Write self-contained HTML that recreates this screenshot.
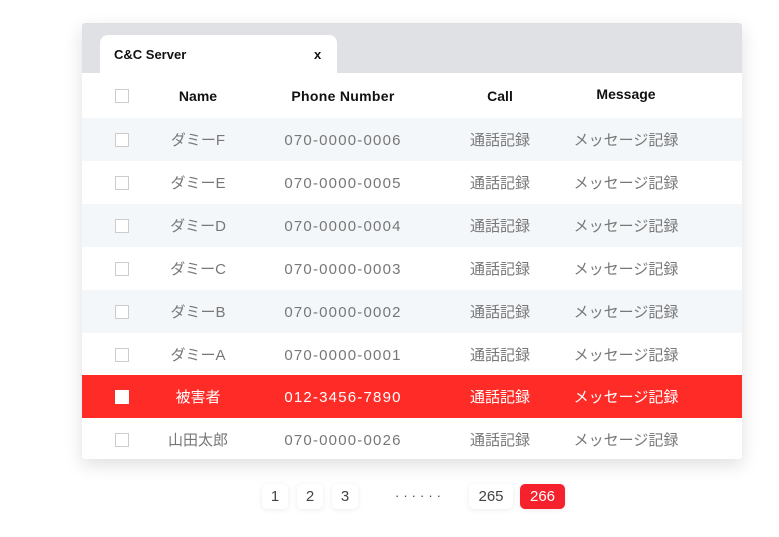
<!DOCTYPE html>
<html><head><meta charset="utf-8"><style>
body{margin:0;width:779px;height:537px;background:#fff;font-family:"Liberation Sans","Noto Sans CJK JP",sans-serif;position:relative;overflow:hidden}
.card{position:absolute;left:82px;top:23px;width:660px;height:436px;background:#fff;box-shadow:0 6px 18px rgba(0,0,0,.13);border-radius:3px;overflow:hidden}
.bar{position:absolute;left:0;top:0;width:660px;height:50px;background:#dfe1e5}
.tab{position:absolute;left:18px;top:12px;width:237px;height:38px;background:#fff;border-radius:8px 8px 0 0}
.tab .t{position:absolute;left:14px;top:12px;font-size:13px;font-weight:bold;color:#111}
.tab .x{position:absolute;left:214px;top:12px;font-size:13px;font-weight:bold;color:#111}
.row{position:absolute;left:0;width:660px;height:43px;font-size:15px;color:#777}
.row span{position:absolute;top:1px;line-height:43px;transform:translateX(-50%);white-space:nowrap}
.row span.p{letter-spacing:1.2px}
.cb{position:absolute;left:33px;top:15px;width:12px;height:12px;border:1px solid #ccc;background:#fff}
.hd{top:50px;height:45px;border-bottom:1px solid #e5e5e5;color:#111;font-weight:bold;font-size:14px}
.hd span{line-height:45px}
.s{background:#f4f7fa}
.red{background:#ff2b26;color:#fff}
.red .cb{border-color:#fff}
.pg{position:absolute;top:484px;height:25px;line-height:25px;text-align:center;font-size:15px;color:#444;background:#fff;border-radius:5px;box-shadow:0 1px 6px rgba(0,0,0,.08)}
</style></head><body>
<div class="card">
<div class="bar"></div>
<div class="tab"><span class="t">C&amp;C Server</span><span class="x">x</span></div>
<div class="row hd"><div class="cb" style="top:16px"></div><span style="left:116px">Name</span><span style="left:261px;letter-spacing:.3px">Phone Number</span><span style="left:418px">Call</span><span style="left:544px;top:-1px">Message</span></div>
<div class="row s" style="top:95px"><div class="cb"></div><span style="left:116px">ダミーF</span><span class="p" style="left:261px">070-0000-0006</span><span style="left:418px">通話記録</span><span style="left:544px">メッセージ記録</span></div>
<div class="row" style="top:138px"><div class="cb"></div><span style="left:116px">ダミーE</span><span class="p" style="left:261px">070-0000-0005</span><span style="left:418px">通話記録</span><span style="left:544px">メッセージ記録</span></div>
<div class="row s" style="top:181px"><div class="cb"></div><span style="left:116px">ダミーD</span><span class="p" style="left:261px">070-0000-0004</span><span style="left:418px">通話記録</span><span style="left:544px">メッセージ記録</span></div>
<div class="row" style="top:224px"><div class="cb"></div><span style="left:116px">ダミーC</span><span class="p" style="left:261px">070-0000-0003</span><span style="left:418px">通話記録</span><span style="left:544px">メッセージ記録</span></div>
<div class="row s" style="top:267px"><div class="cb"></div><span style="left:116px">ダミーB</span><span class="p" style="left:261px">070-0000-0002</span><span style="left:418px">通話記録</span><span style="left:544px">メッセージ記録</span></div>
<div class="row" style="top:310px"><div class="cb"></div><span style="left:116px">ダミーA</span><span class="p" style="left:261px">070-0000-0001</span><span style="left:418px">通話記録</span><span style="left:544px">メッセージ記録</span></div>
<div class="row red" style="top:352px"><div class="cb"></div><span style="left:116px">被害者</span><span class="p" style="left:261px">012-3456-7890</span><span style="left:418px">通話記録</span><span style="left:544px">メッセージ記録</span></div>
<div class="row" style="top:395px"><div class="cb"></div><span style="left:116px">山田太郎</span><span class="p" style="left:261px">070-0000-0026</span><span style="left:418px">通話記録</span><span style="left:544px">メッセージ記録</span></div>
</div>
<div class="pg" style="left:262px;width:26px">1</div>
<div class="pg" style="left:297px;width:26px">2</div>
<div class="pg" style="left:332px;width:26px">3</div>
<div style="position:absolute;left:395px;top:486px;line-height:20px;font-size:13px;letter-spacing:4px;color:#444">······</div>
<div class="pg" style="left:469px;width:44px">265</div>
<div class="pg" style="left:520px;width:45px;background:#f5222d;color:#fff">266</div>
</body></html>
